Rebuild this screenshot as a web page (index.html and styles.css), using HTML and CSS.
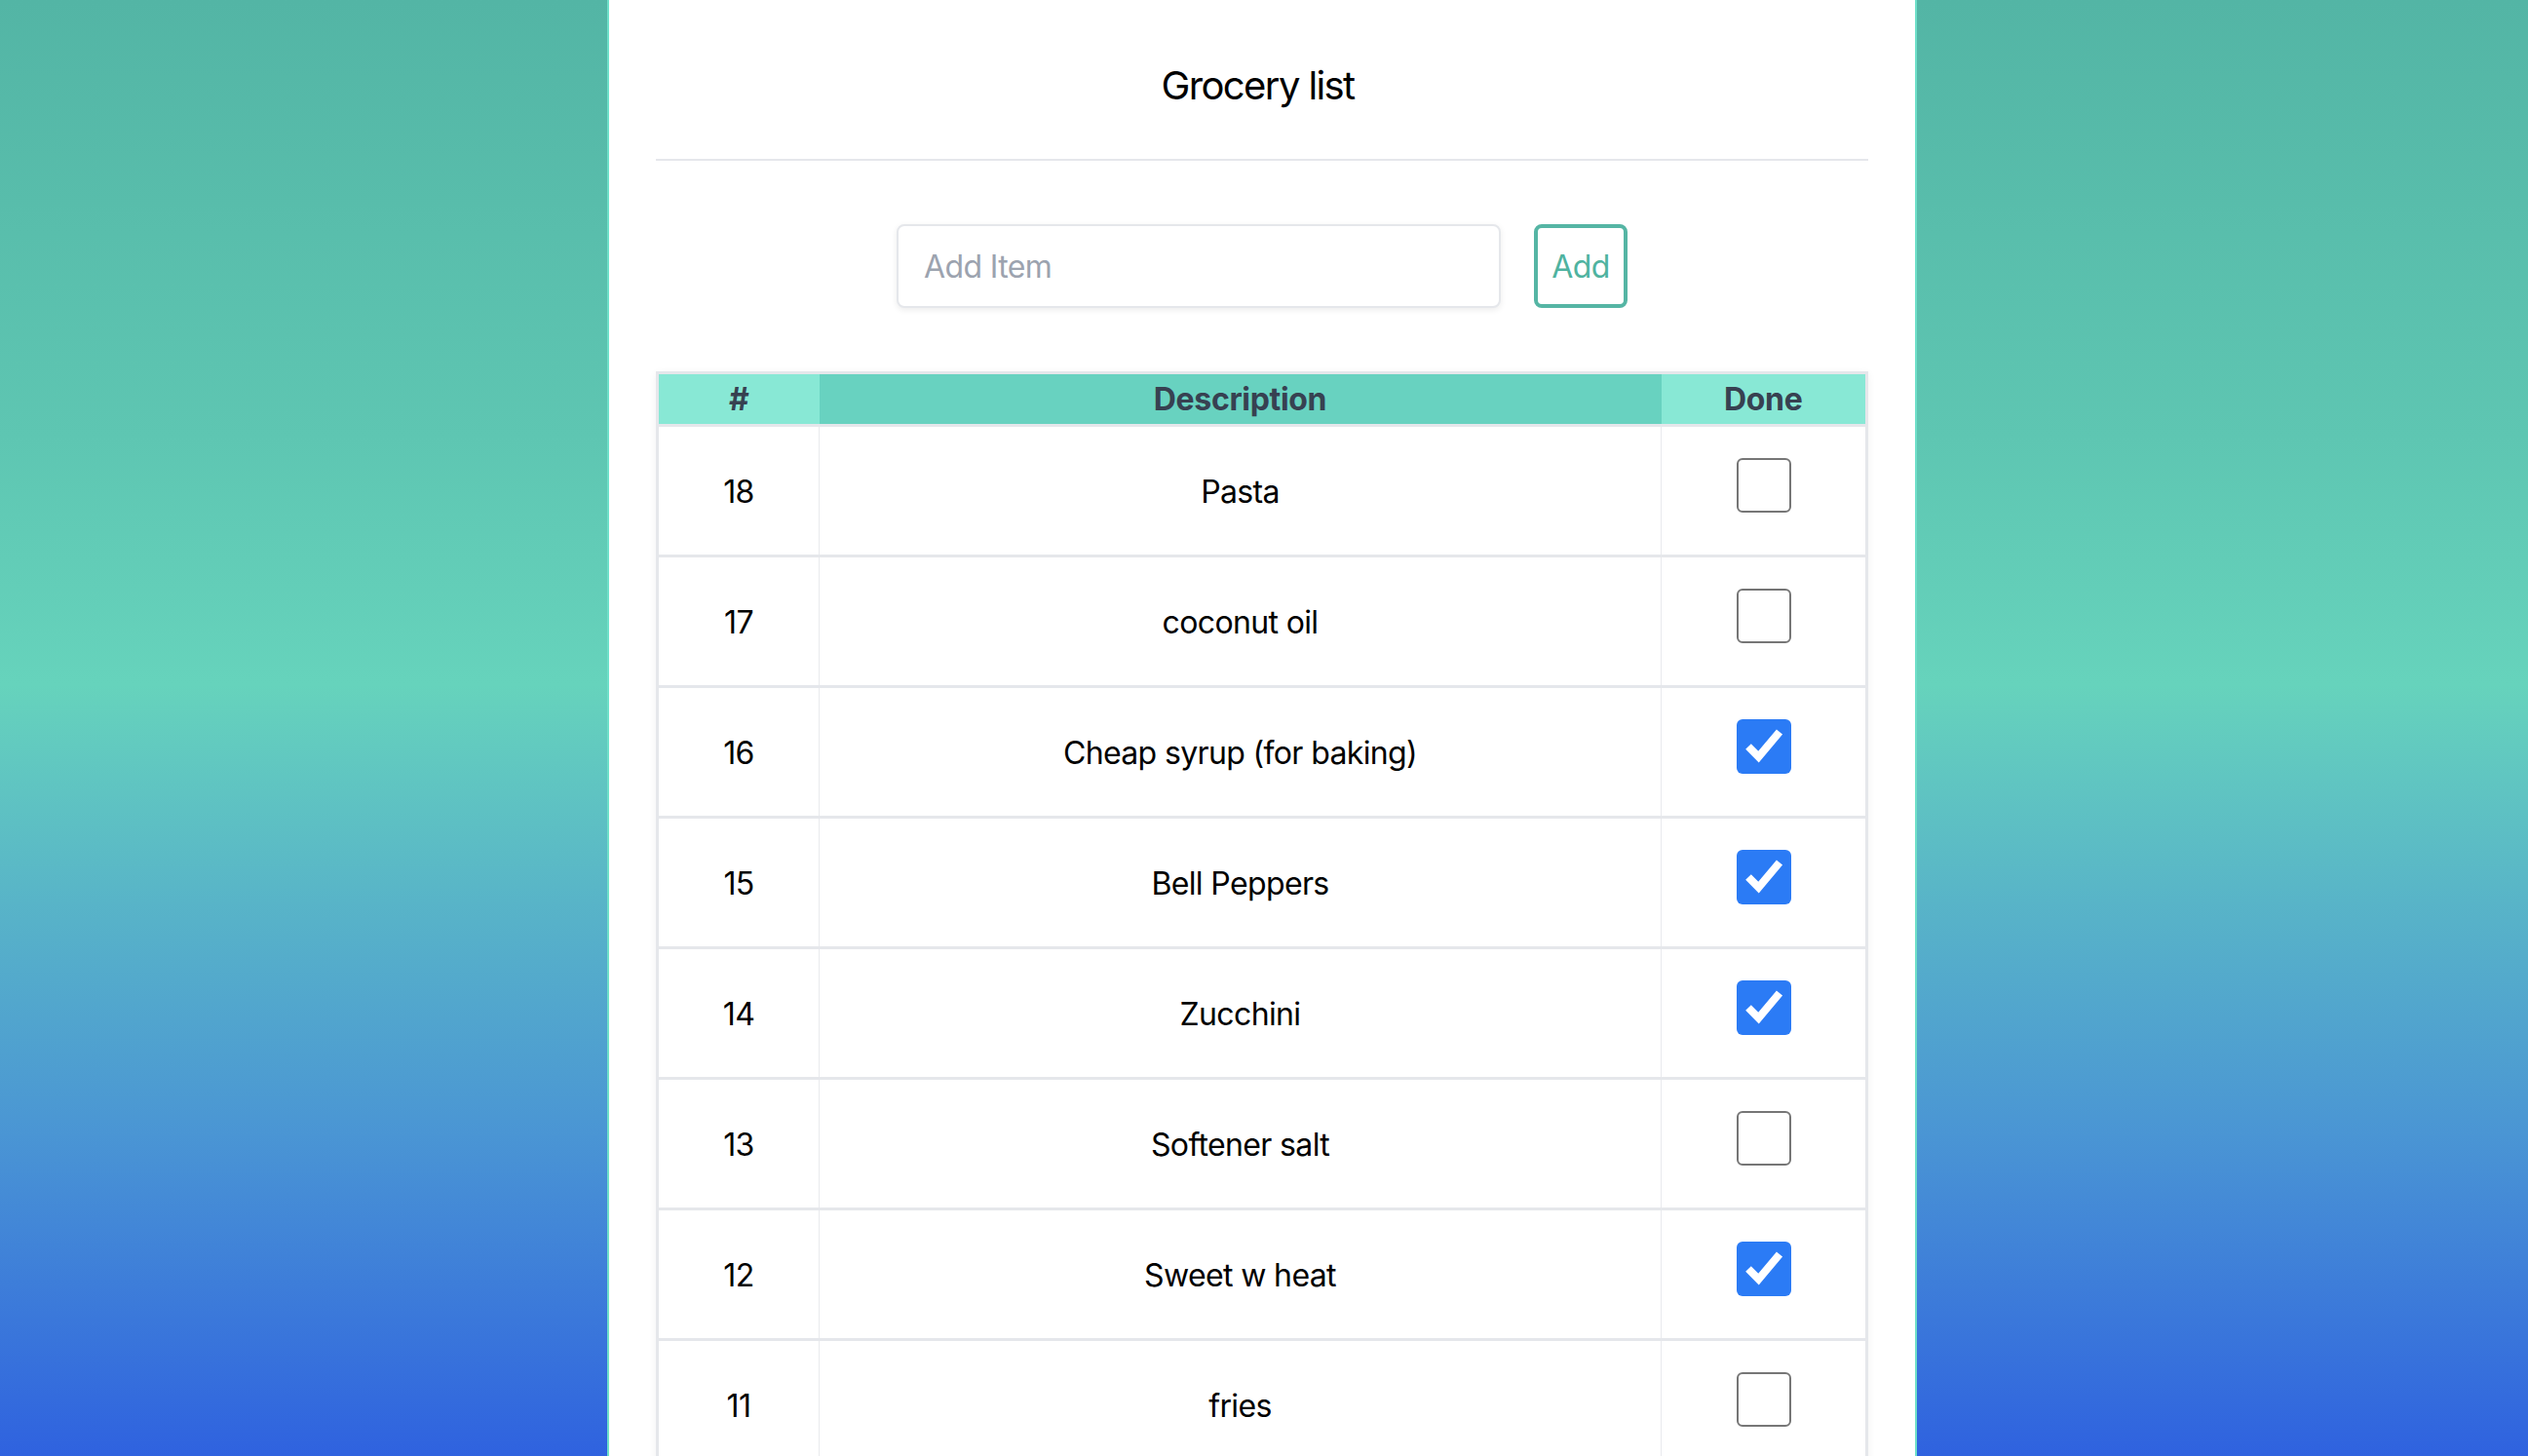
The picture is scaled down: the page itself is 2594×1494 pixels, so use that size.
FILE: index.html
```html
<!DOCTYPE html>
<html lang="en">
<head>
<meta charset="utf-8">
<title>Grocery list</title>
<link rel="stylesheet" href="styles.css">
</head>
<body>
<main class="card">
  <header class="card-header">
    <h1 class="title">Grocery list</h1>
  </header>
  <form class="add-form">
    <input class="add-input" type="text" placeholder="Add Item">
    <button class="add-btn" type="button">Add</button>
  </form>
  <table class="grocery-table">
    <thead>
      <tr>
        <th class="col-num">#</th>
        <th class="col-desc">Description</th>
        <th class="col-done">Done</th>
      </tr>
    </thead>
    <tbody>
      <tr><td>18</td><td>Pasta</td><td class="done-cell"><span class="cb"></span></td></tr>
      <tr><td>17</td><td>coconut oil</td><td class="done-cell"><span class="cb"></span></td></tr>
      <tr><td>16</td><td>Cheap syrup (for baking)</td><td class="done-cell"><span class="cb checked"><svg viewBox="0 0 56 56" width="56" height="56"><path d="M12 28 L22.5 38.5 L44 13" fill="none" stroke="#fff" stroke-width="8"/></svg></span></td></tr>
      <tr><td>15</td><td>Bell Peppers</td><td class="done-cell"><span class="cb checked"><svg viewBox="0 0 56 56" width="56" height="56"><path d="M12 28 L22.5 38.5 L44 13" fill="none" stroke="#fff" stroke-width="8"/></svg></span></td></tr>
      <tr><td>14</td><td>Zucchini</td><td class="done-cell"><span class="cb checked"><svg viewBox="0 0 56 56" width="56" height="56"><path d="M12 28 L22.5 38.5 L44 13" fill="none" stroke="#fff" stroke-width="8"/></svg></span></td></tr>
      <tr><td>13</td><td>Softener salt</td><td class="done-cell"><span class="cb"></span></td></tr>
      <tr><td>12</td><td>Sweet w heat</td><td class="done-cell"><span class="cb checked"><svg viewBox="0 0 56 56" width="56" height="56"><path d="M12 28 L22.5 38.5 L44 13" fill="none" stroke="#fff" stroke-width="8"/></svg></span></td></tr>
      <tr><td>11</td><td>fries</td><td class="done-cell"><span class="cb"></span></td></tr>
    </tbody>
  </table>
</main>
</body>
</html>
```

FILE: styles.css
```css
* { box-sizing: border-box; }

html, body {
  margin: 0;
  padding: 0;
}

body {
  min-height: 100vh;
  font-family: Inter, "Noto Sans", "Liberation Sans", sans-serif;
  color: #000;
  background: linear-gradient(to bottom, #53b5a5 0%, #5ec6b2 30%, #66d3bc 47%, #58b4c8 62%, #4a95d4 78%, #2f62df 100%);
  background-attachment: fixed;
}

.card {
  width: 1344px;
  margin: 0 0 0 calc((100% - 1348px) / 2);
  background: #fff;
  border-left: 2px solid #6fe0c9;
  border-right: 2px solid #6fe0c9;
  padding: 0 48px 48px;
}

.card-header {
  padding: 58px 0 45px;
  border-bottom: 2px solid #e5e7eb;
}

.title {
  margin: 0;
  padding-right: 9px;
  font-size: 40px;
  line-height: 60px;
  font-weight: 400;
  letter-spacing: -0.04em;
  text-align: center;
  color: #000;
}

.add-form {
  display: flex;
  justify-content: center;
  gap: 34px;
  margin: 65px 0 65px;
}

.add-input {
  width: 620px;
  height: 86px;
  border: 2px solid #e5e7eb;
  border-radius: 8px;
  padding: 0 26px;
  font-family: inherit;
  font-size: 32px;
  letter-spacing: -0.02em;
  color: #111;
  box-shadow: 0 2px 6px rgba(0, 0, 0, 0.08);
  outline: none;
}

.add-input::placeholder { color: #9ca3af; }

.add-btn {
  width: 96px;
  height: 86px;
  border: 4px solid #55b5a4;
  border-radius: 8px;
  background: #fff;
  color: #4fb3a0;
  font-family: inherit;
  font-size: 32px;
  letter-spacing: -0.02em;
  padding: 0;
}

.grocery-table {
  width: 100%;
  border-collapse: collapse;
  border: 3px solid #e5e7eb;
  box-shadow: 0 2px 8px rgba(0, 0, 0, 0.06);
  table-layout: fixed;
}

.grocery-table th {
  height: 54px;
  padding: 0;
  font-size: 32px;
  font-weight: 700;
  letter-spacing: -0.01em;
  color: #374151;
  text-align: center;
  border-bottom: 3px solid #e5e7eb;
}

.col-num { width: 166px; background: #88e8d5; }
.col-desc { background: #68d2c0; }
.col-done { width: 211px; background: #88e8d5; }

.grocery-table td {
  height: 134px;
  padding: 2px 0 0;
  font-size: 32px;
  letter-spacing: -0.02em;
  text-align: center;
  vertical-align: middle;
  border-bottom: 3px solid #e5e7eb;
  border-left: 1px solid #e9eaee;
}

.grocery-table td:first-child { border-left: none; }

.grocery-table td.done-cell { padding: 0 0 12px; }

.cb {
  display: block;
  width: 56px;
  height: 56px;
  margin: 0 auto;
  border: 2px solid #767676;
  border-radius: 6px;
  background: #fff;
}

.cb.checked {
  border: none;
  background: #2b7bf5;
}

.cb svg { display: block; }
```
